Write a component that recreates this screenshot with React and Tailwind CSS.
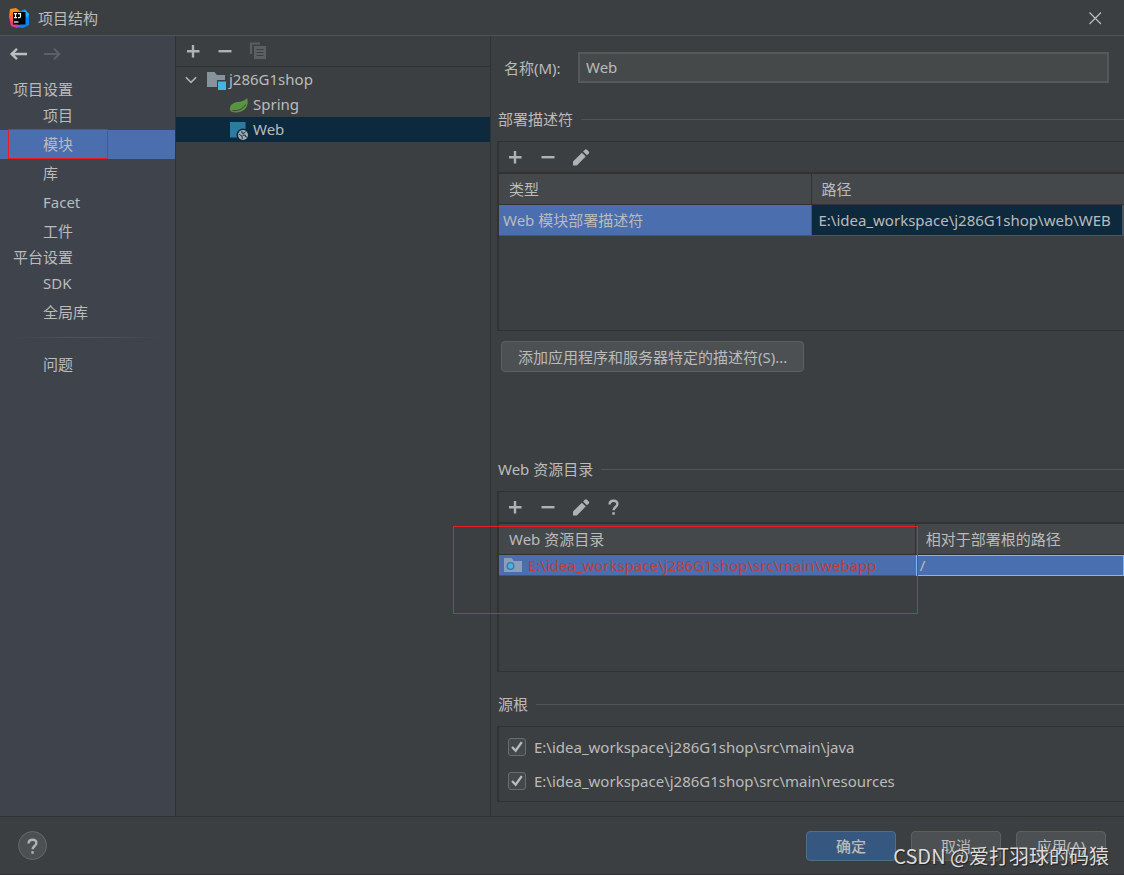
import { useState } from "react";

const projectItems = ["项目", "模块", "库", "Facet", "工件"];
const platformItems = ["SDK", "全局库"];

const sourceRoots = [
  "E:\\idea_workspace\\j286G1shop\\src\\main\\java",
  "E:\\idea_workspace\\j286G1shop\\src\\main\\resources",
];

/* ---------- icons ---------- */

const Svg = ({ children, className = "size-5" }) => (
  <svg viewBox="0 0 20 20" className={`block shrink-0 ${className}`} fill="none" aria-hidden="true">
    {children}
  </svg>
);

const PlusIcon = () => (
  <Svg><path d="M10 4v12.5M4 10.2h12.5" stroke="#afb1b3" strokeWidth="2.4" /></Svg>
);

const MinusIcon = () => (
  <Svg><path d="M3.5 10.2h13" stroke="#afb1b3" strokeWidth="2.4" /></Svg>
);

const CopyIcon = () => (
  <Svg>
    <path d="M4 13V2.500H13" stroke="#5c5f61" strokeWidth="2.2" />
    <path d="M7 5h12v13H7z" fill="#5c5f61" />
    <path d="M9.500 8.500h7M9.500 11.500h7M9.500 14.500h7" stroke="#3c3f41" strokeWidth="1.2" />
  </Svg>
);

const PencilIcon = () => (
  <Svg>
    <path d="M2 18.4v-3.900l8.900-8.800 3.800 3.800-8.800 8.900z" fill="#afb1b3" />
    <path d="M12.100 4.500l1.800-1.800q1-.9 2 0l1.900 1.900q.9.9 0 1.800l-1.900 1.900z" fill="#afb1b3" />
  </Svg>
);

const QuestionIcon = () => (
  <Svg>
    <path d="M5.600 7.600C5.600 4.900 7.200 3.700 9.500 3.700s3.900 1.300 3.900 3.400c0 2.900-3.800 3-3.800 6.200" stroke="#afb1b3" strokeWidth="2.4" />
    <path d="M8.300 15.200h2.500v2.500H8.300z" fill="#afb1b3" />
  </Svg>
);

const ArrowIcon = ({ right }) => (
  <Svg>
    {right ? (
      <path d="M2 10h15.5M12 4.8l5.4 5.2-5.4 5.2" stroke="#5d6064" strokeWidth="2" />
    ) : (
      <path d="M18 10H2.5M8 4.8L2.6 10 8 15.2" stroke="#bcbec0" strokeWidth="2.4" />
    )}
  </Svg>
);

const ChevronIcon = () => (
  <Svg className="size-4"><path d="M3.5 6.5L10 13l6.5-6.5" stroke="#afb1b3" strokeWidth="2" /></Svg>
);

const ModuleIcon = () => (
  <Svg>
    <path d="M1 2h7.5l2.3 3H19v5h-8v7H1z" fill="#87939a" />
    <path d="M12 11.5h8V20h-8z" fill="#40b6e0" />
  </Svg>
);

const SpringIcon = () => (
  <Svg>
    <path d="M18 3c1.400 4 .8 9-2.500 11.500C12 17.800 6 18.300 2.200 16.600.2 14.500.6 11 3.300 8.900 7.500 5.800 14.500 8 18 3z" fill="#589442" />
    <path d="M3.500 15.500c5 .8 10.500-1.200 13-6" stroke="#3c3f41" strokeWidth="1" />
  </Svg>
);

const WebIcon = () => (
  <Svg>
    <path d="M1 2h15.500v7A6.500 6.500 0 0 0 8 17.500H1z" fill="#2c7ba0" />
    <circle cx="14" cy="15" r="5" fill="#a2abb2" />
    <path d="M10.200 14.200l3 2.300v2.300M12.800 11.200l.2 2h2.200l1.500-1.700M13.500 15.200h2.700l.5 1.600 1.200.2" stroke="#0d293e" strokeWidth="1" />
  </Svg>
);

const WebFolderIcon = () => (
  <Svg>
    <path d="M1 3h7.500l2.300 3H19v11H1z" fill="#8c9fb8" />
    <circle cx="7.500" cy="11" r="4" fill="#4b6eaf" />
    <circle cx="7.500" cy="11" r="2.700" fill="#40b6e0" />
  </Svg>
);

const IdeaLogo = () => (
  <Svg>
    <path d="M1 1l6-1 5 4-7 8-5-2z" fill="#fc8a1e" />
    <path d="M0 9l5-3 4 10-1 4-6-2z" fill="#f0368b" />
    <path d="M2 5l3 2v7l-4-2z" fill="#fe5f3c" />
    <path d="M11 3l5-2 4 5v11l-6 3-7-1 8-5z" fill="#0a83f7" />
    <path d="M7 17l5 .2-3 2.600z" fill="#9b4bd8" />
    <path d="M16 2l4 4-2 4-4-6z" fill="#17b8f5" />
    <path d="M4 4h12.500v12.500H4z" fill="#000" />
    <path d="M5 5.600h3M6.500 5.600v4M5 9.600h3M9 5.600h2.500v2.800q0 1.200-1.200 1.200H9" stroke="#fff" strokeWidth="1.200" />
    <path d="M5 14h4.500" stroke="#fff" strokeWidth="1.200" />
  </Svg>
);

/* ---------- shared parts ---------- */

const IconButton = ({ label, disabled, children }) => (
  <button type="button" aria-label={label} disabled={disabled} className="size-5">
    {children}
  </button>
);

const SectionTitle = ({ children }) => (
  <div className="flex h-5 items-center gap-2 pl-px">
    <h2>{children}</h2>
    <span className="h-px flex-1 bg-[#515456]" />
  </div>
);

const PanelToolbar = ({ help }) => (
  <div className="flex h-8 items-center gap-[13px] border-b-2 border-[#323232] pl-1.5">
    <IconButton label="添加"><PlusIcon /></IconButton>
    <IconButton label="移除"><MinusIcon /></IconButton>
    <IconButton label="编辑"><PencilIcon /></IconButton>
    {help && <IconButton label="帮助"><QuestionIcon /></IconButton>}
  </div>
);

const SideItem = ({ name, active, onSelect }) => (
  <li className="relative">
    <button
      type="button"
      onClick={() => onSelect(name)}
      className={`block h-[29px] w-full pb-0.5 pl-[43px] text-left ${active ? "bg-[#4b6eaf]" : ""}`}
    >
      {name}
    </button>
    {name === "模块" && (
      <span className="pointer-events-none absolute -top-px left-2 h-[30px] w-[100px] border border-[#ed1c24]" />
    )}
  </li>
);

const Sidebar = () => {
  const [current, setCurrent] = useState("模块");

  const renderItems = (items) => (
    <ul>
      {items.map((name) => (
        <SideItem key={name} name={name} active={current === name} onSelect={setCurrent} />
      ))}
    </ul>
  );

  return (
    <nav className="w-44 shrink-0 border-r border-[#323232] bg-[#3f434c]">
      <div className="flex h-[42px] items-start gap-[13px] px-[9px] pt-2">
        <IconButton label="后退"><ArrowIcon /></IconButton>
        <IconButton label="前进" disabled><ArrowIcon right /></IconButton>
      </div>
      <h3 className="h-[23px] pl-[13px] leading-[23px]">项目设置</h3>
      {renderItems(projectItems)}
      <h3 className="h-[23px] pl-[13px] leading-[23px]">平台设置</h3>
      {renderItems(platformItems)}
      <div className="mx-3 mt-2.5 mb-3 h-px bg-linear-to-r from-transparent via-[#53565e] to-transparent" />
      {renderItems(["问题"])}
    </nav>
  );
};

const ModuleTree = () => (
  <div className="w-[315px] shrink-0 border-r border-[#323232]">
    <div className="flex h-[31px] items-center gap-3 border-b border-[#323232] pl-[7px]">
      <IconButton label="添加"><PlusIcon /></IconButton>
      <IconButton label="移除"><MinusIcon /></IconButton>
      <IconButton label="复制" disabled><CopyIcon /></IconButton>
    </div>
    <ul className="leading-[25px]">
      <li className="flex h-[25px] items-center pl-[7px]">
        <ChevronIcon />
        <span className="ml-[7px] flex items-center gap-[3px]"><ModuleIcon />j286G1shop</span>
      </li>
      <li className="flex h-[25px] items-center gap-1 pl-[53px]"><SpringIcon />Spring</li>
      <li className="flex h-[25px] items-center gap-1 bg-[#0d293e] pl-[53px]"><WebIcon />Web</li>
    </ul>
  </div>
);

const headCell = "h-[31px] border-b border-[#323232] bg-[#45484a] text-left font-normal";

const DescriptorTable = () => (
  <div className="h-[190px] border-y border-l-2 border-[#323232]">
    <PanelToolbar />
    <table className="w-full table-fixed border-separate border-spacing-0">
      <thead>
        <tr>
          <th className={`${headCell} w-1/2 border-r pl-2.5`}>类型</th>
          <th className={`${headCell} pl-2.5`}>路径</th>
        </tr>
      </thead>
      <tbody>
        <tr className="whitespace-nowrap">
          <td className="h-[31px] border-r border-b border-[#515456] bg-[#4b6eaf] pl-1">Web 模块部署描述符</td>
          <td className="h-[31px] border-r-2 border-b border-[#515456] bg-[#0d293e] pl-[7px]">
            E:\idea_workspace\j286G1shop\web\WEB
          </td>
        </tr>
      </tbody>
    </table>
  </div>
);

const ResourceTable = () => (
  <div className="relative h-[181px] border-y border-l-2 border-[#323232]">
    <PanelToolbar help />
    <table className="w-full table-fixed border-separate border-spacing-0">
      <thead>
        <tr>
          <th className={`${headCell} w-2/3 border-r pl-2.5`}>Web 资源目录</th>
          <th className={`${headCell} pl-2.5`}>相对于部署根的路径</th>
        </tr>
      </thead>
      <tbody>
        <tr className="whitespace-nowrap">
          <td className="h-5 border-b border-[#515456] bg-[#4b6eaf] pl-1 leading-5 text-[#bc3f3c]">
            <span className="flex items-center gap-[5px]"><WebFolderIcon />E:\idea_workspace\j286G1shop\src\main\webapp</span>
          </td>
          <td className="h-5 border border-[#7cb8f5] bg-[#4b6eaf] pl-[3px] leading-[19px]">/</td>
        </tr>
      </tbody>
    </table>
    {/* red frame around the resource directory */}
    <div className="pointer-events-none absolute top-[34px] -left-[46px] h-[88px] w-[calc(66.667%+48px)] border border-[#ed1c24]" />
  </div>
);

const SourceRoot = ({ path }) => {
  const [checked, setChecked] = useState(true);
  return (
    <label className="flex h-[34px] items-center gap-2">
      <span className="grid size-[18px] shrink-0">
        <input
          type="checkbox"
          checked={checked}
          onChange={(e) => setChecked(e.target.checked)}
          className="col-start-1 row-start-1 size-[18px] appearance-none rounded-[3px] border border-[#6b6b6b] bg-[#43494a]"
        />
        {checked && (
          <Svg className="pointer-events-none col-start-1 row-start-1 size-[18px]">
            <path d="M4.500 10l4 4.200L15.300 4.500" stroke="#bbbbbb" strokeWidth="2.600" />
          </Svg>
        )}
      </span>
      {path}
    </label>
  );
};

const ModuleEditor = () => {
  const [name, setName] = useState("Web");

  return (
    <main className="min-w-0 flex-1 pt-4 pb-3.5 pl-1.5">
      <div className="flex items-center pr-[15px] pl-[7px]">
        <label htmlFor="module-name" className="w-[74px] shrink-0">名称(M):</label>
        <input
          id="module-name"
          value={name}
          onChange={(e) => setName(e.target.value)}
          className="h-[31px] min-w-0 flex-1 border-2 border-[#56595a] bg-[#45494a] px-1.5 pb-0.5 outline-none"
        />
      </div>

      <section className="mt-[26px] space-y-3">
        <SectionTitle>部署描述符</SectionTitle>
        <DescriptorTable />
      </section>
      <button type="button" className="mt-2.5 ml-1 block h-[31px] rounded-[4px] border border-[#5e6060] bg-[#4c5052] px-4">
        添加应用程序和服务器特定的描述符(S)...
      </button>

      <section className="mt-[87px] space-y-3">
        <SectionTitle>Web 资源目录</SectionTitle>
        <ResourceTable />
      </section>

      <section className="mt-[22px] space-y-3">
        <SectionTitle>源根</SectionTitle>
        <div className="h-[76px] border-y border-l-2 border-[#323232] py-[3px] pl-[9px]">
          {sourceRoots.map((path) => (
            <SourceRoot key={path} path={path} />
          ))}
        </div>
      </section>
    </main>
  );
};

const App = () => (
  <div className='flex min-h-screen flex-col bg-[#3c3f41] font-["Noto_Sans","Noto_Sans_CJK_SC",sans-serif] text-[15px] leading-5 text-[#bbbbbb]'>
    <header className="flex h-9 items-center gap-[9px] border-b border-[#515456] pr-[19px] pl-[9px]">
      <IdeaLogo />
      <h1 className="flex-1">项目结构</h1>
      <button type="button" aria-label="关闭" className="size-5">
        <Svg><path d="M4.500 4.500l11.500 11.500M16 4.500L4.500 16" stroke="#bbbbbb" strokeWidth="1.200" /></Svg>
      </button>
    </header>

    <div className="flex flex-1">
      <Sidebar />
      <ModuleTree />
      <ModuleEditor />
    </div>

    <footer className="relative flex h-[59px] items-center gap-[15px] border-y border-[#323232] pr-[18px] pl-[18px]">
      <button type="button" aria-label="帮助" className="mr-auto flex size-[29px] items-center justify-center rounded-full border border-[#65696b] bg-[#4c5052]">
        <QuestionIcon />
      </button>
      <button type="button" className="h-[30px] w-[90px] rounded-[4px] border border-[#4c708c] bg-[#365880] font-medium">确定</button>
      <button type="button" className="h-[30px] w-[90px] rounded-[4px] border border-[#5e6060] bg-[#4c5052]">取消</button>
      <button type="button" className="h-[30px] w-[90px] rounded-[4px] border border-[#5e6060] bg-[#4c5052]">应用(A)</button>
      <p className='pointer-events-none absolute right-[15px] bottom-1 font-["Noto_Sans_CJK_SC",sans-serif] text-xl leading-7 text-[#dcdcdc] [text-shadow:1px_1px_1px_#222]'>
        CSDN @爱打羽球的码猿
      </p>
    </footer>
  </div>
);

export default App;
